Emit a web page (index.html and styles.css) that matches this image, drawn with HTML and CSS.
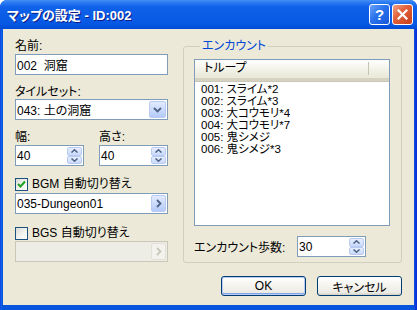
FILE: index.html
```html
<!DOCTYPE html>
<html lang="ja">
<head>
<meta charset="utf-8">
<title>マップの設定</title>
<link rel="stylesheet" href="styles.css">
</head>
<body>
<div class="window">
  <div class="titlebar">
    <span class="title">マップの設定 - ID:002</span>
    <div class="tb-buttons">
      <div class="tb-btn help">?</div>
      <div class="tb-btn close">
        <svg width="11" height="11" viewBox="0 0 11 11"><path d="M1.5 1.5 L9.5 9.5 M9.5 1.5 L1.5 9.5" stroke="#fff" stroke-width="2.2" stroke-linecap="square"/></svg>
      </div>
    </div>
  </div>
  <div class="client">
    <div class="main">
      <div class="left">
        <div class="label">名前:</div>
        <div class="edit name">002&nbsp; 洞窟</div>
        <div class="label gap">タイルセット:</div>
        <div class="edit combo">
          <span class="val">043: 土の洞窟</span>
          <span class="xbtn dd"><svg width="9" height="6" viewBox="0 0 9 6"><path d="M1 1 L4.5 4.5 L8 1" fill="none" stroke="#4D6185" stroke-width="1.8"/></svg></span>
        </div>
        <div class="size-row">
          <div class="size-col">
            <div class="label">幅:</div>
            <div class="edit spin">
              <span class="val">40</span>
              <span class="spinbtns">
                <span class="sb"><svg width="7" height="4" viewBox="0 0 7 4"><path d="M0.5 3.5 L3.5 0.8 L6.5 3.5" fill="none" stroke="#4D6185" stroke-width="1.5"/></svg></span>
                <span class="sb"><svg width="7" height="4" viewBox="0 0 7 4"><path d="M0.5 0.5 L3.5 3.2 L6.5 0.5" fill="none" stroke="#4D6185" stroke-width="1.5"/></svg></span>
              </span>
            </div>
          </div>
          <div class="size-col">
            <div class="label">高さ:</div>
            <div class="edit spin">
              <span class="val">40</span>
              <span class="spinbtns">
                <span class="sb"><svg width="7" height="4" viewBox="0 0 7 4"><path d="M0.5 3.5 L3.5 0.8 L6.5 3.5" fill="none" stroke="#4D6185" stroke-width="1.5"/></svg></span>
                <span class="sb"><svg width="7" height="4" viewBox="0 0 7 4"><path d="M0.5 0.5 L3.5 3.2 L6.5 0.5" fill="none" stroke="#4D6185" stroke-width="1.5"/></svg></span>
              </span>
            </div>
          </div>
        </div>
        <div class="check bgm">
          <span class="box checked"><svg width="9" height="9" viewBox="0 0 9 9"><path d="M1 4 L3.5 6.5 L8 1.5" fill="none" stroke="#21A121" stroke-width="2"/></svg></span>
          <span>BGM 自動切り替え</span>
        </div>
        <div class="edit field">
          <span class="val">035-Dungeon01</span>
          <span class="xbtn go"><svg width="6" height="9" viewBox="0 0 6 9"><path d="M1 1 L4.5 4.5 L1 8" fill="none" stroke="#4D6185" stroke-width="1.8"/></svg></span>
        </div>
        <div class="check bgs">
          <span class="box"></span>
          <span>BGS 自動切り替え</span>
        </div>
        <div class="edit field disabled">
          <span class="val"></span>
          <span class="xbtn go off"><svg width="6" height="9" viewBox="0 0 6 9"><path d="M1 1 L4.5 4.5 L1 8" fill="none" stroke="#C9C7BA" stroke-width="1.8"/></svg></span>
        </div>
      </div>
      <fieldset class="group">
        <legend>エンカウント</legend>
        <div class="listview">
          <div class="lv-header">
            <span class="col1">トループ</span>
            <span class="col2"></span>
          </div>
          <div class="lv-rows">
            <div class="row">001: スライム*2</div>
            <div class="row">002: スライム*3</div>
            <div class="row">003: 大コウモリ*4</div>
            <div class="row">004: 大コウモリ*7</div>
            <div class="row">005: 鬼シメジ</div>
            <div class="row">006: 鬼シメジ*3</div>
          </div>
        </div>
        <div class="steps">
          <span class="steps-label">エンカウント歩数:</span>
          <div class="edit spin steps-spin">
            <span class="val">30</span>
            <span class="spinbtns">
              <span class="sb"><svg width="7" height="4" viewBox="0 0 7 4"><path d="M0.5 3.5 L3.5 0.8 L6.5 3.5" fill="none" stroke="#4D6185" stroke-width="1.5"/></svg></span>
              <span class="sb"><svg width="7" height="4" viewBox="0 0 7 4"><path d="M0.5 0.5 L3.5 3.2 L6.5 0.5" fill="none" stroke="#4D6185" stroke-width="1.5"/></svg></span>
            </span>
          </div>
        </div>
      </fieldset>
    </div>
    <div class="buttons">
      <div class="btn default">OK</div>
      <div class="btn">キャンセル</div>
    </div>
  </div>
</div>
</body>
</html>
```

FILE: styles.css
```css
* { box-sizing: border-box; }

body {
  margin: 0;
  background: #ffffff;
  font-family: "Liberation Sans", "Noto Sans CJK JP", sans-serif;
  font-size: 12px;
  color: #000;
  font-feature-settings: "palt";
}

.window {
  width: 417px;
  height: 310px;
  display: flex;
  flex-direction: column;
  background: linear-gradient(to right, #0831D9 0, #166AEE 1px, #0855DD 2px, #0855DD 414px, #0831D9 416px);
  border-radius: 7px 7px 0 0;
  overflow: hidden;
}

.titlebar {
  height: 29px;
  flex: none;
  display: flex;
  align-items: center;
  justify-content: space-between;
  padding: 0 4px 0 7px;
  background: linear-gradient(to bottom, #4690F8 0, #2E7DF3 2px, #0F61E9 7px, #0A5BE6 18px, #0556E2 25px, #004AD5 29px);
}

.title {
  color: #fff;
  font-weight: bold;
  font-size: 13px;
  text-shadow: 1px 1px 0 #0A1D8A;
}

.tb-buttons {
  display: flex;
  gap: 2px;
}

.tb-btn {
  width: 21px;
  height: 21px;
  border: 1px solid #fff;
  border-radius: 3px;
  display: flex;
  align-items: center;
  justify-content: center;
  color: #fff;
  font-weight: bold;
  font-size: 15px;
}

.help {
  background: linear-gradient(135deg, #6AA3FA 0%, #2A72EC 45%, #1657DA 100%);
}

.close {
  background: linear-gradient(135deg, #F0A489 0%, #E2623C 40%, #C7401A 100%);
}

.client {
  flex: 1;
  margin: 0 3px 5px 3px;
  background: #ECE9D8;
  display: flex;
  flex-direction: column;
}

.main {
  display: flex;
  gap: 15px;
  padding: 10px 12px 0 12px;
}

.left {
  width: 153px;
  padding-top: 1px;
  display: flex;
  flex-direction: column;
}

.label {
  height: 13px;
  line-height: 13px;
  white-space: nowrap;
}

.label.gap { margin-top: 11px; }

.edit {
  height: 21px;
  border: 1px solid #7F9DB9;
  background: #fff;
  display: flex;
  align-items: center;
  padding-left: 1px;
  white-space: nowrap;
}

.name { margin-top: 1px; }

.combo {
  justify-content: space-between;
  padding-right: 1px;
}

.val { flex: 1; }

.xbtn {
  display: flex;
  align-items: center;
  justify-content: center;
  border: 1px solid #B9CBF3;
  border-radius: 2px;
  background: linear-gradient(to bottom, #E1EAFE 0%, #C7D8FC 60%, #B4C9F8 100%);
}

.dd {
  width: 17px;
  height: 17px;
}

.size-row {
  display: flex;
  gap: 15px;
  margin-top: 11px;
}

.size-col {
  width: 69px;
  display: flex;
  flex-direction: column;
}

.size-col .edit { margin-top: 1px; }

.spin {
  padding-right: 1px;
}

.spinbtns {
  width: 15px;
  height: 17px;
  display: flex;
  flex-direction: column;
}

.sb {
  flex: 1;
  display: flex;
  align-items: center;
  justify-content: center;
  border: 1px solid #B9CBF3;
  border-radius: 2px;
  background: linear-gradient(to bottom, #E6EEFC 0%, #C9D9FC 100%);
}

.check {
  height: 13px;
  display: flex;
  align-items: center;
  gap: 4px;
  line-height: 13px;
  white-space: nowrap;
}

.check.bgm { margin-top: 12px; }
.check.bgs { margin-top: 13px; }

.box {
  width: 13px;
  height: 13px;
  flex: none;
  border: 1px solid #1C5180;
  background: linear-gradient(135deg, #DCDCD7 0%, #F4F4F0 60%, #FFFFFF 100%);
  display: flex;
  align-items: center;
  justify-content: center;
}

.field {
  margin-top: 2px;
  padding-right: 1px;
}

.go {
  width: 15px;
  height: 17px;
}

.disabled {
  margin-top: 1px;
  border-color: #C9C7BA;
  background: #EEEDE5;
}

.go.off {
  border-color: #E3E1D6;
  background: #F3F2EC;
}

.group {
  margin: 0;
  width: 219px;
  height: 224px;
  padding: 6px 11px 0 10px;
  border: 1px solid #D0D0BF;
  border-radius: 3px;
}

.group legend {
  margin-left: 6px;
  padding: 0 2px;
  color: #0046D5;
  line-height: 14px;
  height: 14px;
}

.listview {
  width: 196px;
  height: 167px;
  border: 1px solid #7F9DB9;
  background: #fff;
}

.lv-header {
  height: 21px;
  display: flex;
  background: linear-gradient(to bottom, #FFFFFF 0%, #EBEADB 85%);
  border-bottom: 3px solid #D6D2C2;
  box-shadow: 0 1px 0 #CBC7B8;
}

.col1 {
  width: 174px;
  padding-left: 9px;
  border-right: 1px solid #C7C5B2;
  margin: 2px 0 3px 0;
  line-height: 13px;
}

.col2 { flex: 1; }

.lv-rows {
  padding: 2px 0 0 6px;
  font-size: 11.5px;
}

.row {
  height: 12px;
  line-height: 12px;
  white-space: nowrap;
}

.steps {
  display: flex;
  align-items: center;
  margin-top: 10px;
}

.steps-label {
  width: 103px;
  white-space: nowrap;
}

.steps-spin {
  width: 69px;
}

.buttons {
  display: flex;
  justify-content: flex-end;
  gap: 11px;
  padding: 13px 12px 0 0;
}

.btn {
  width: 85px;
  height: 20px;
  border: 1px solid #003C74;
  border-radius: 3px;
  background: linear-gradient(to bottom, #FFFFFF 0%, #F4F3EE 50%, #ECEBE6 85%, #D6D0C5 100%);
  display: flex;
  align-items: center;
  justify-content: center;
}

.btn.default {
  box-shadow: inset 0 0 0 1px #B6CCF7, inset 0 -1px 0 1px #84A5E6;
}
```
